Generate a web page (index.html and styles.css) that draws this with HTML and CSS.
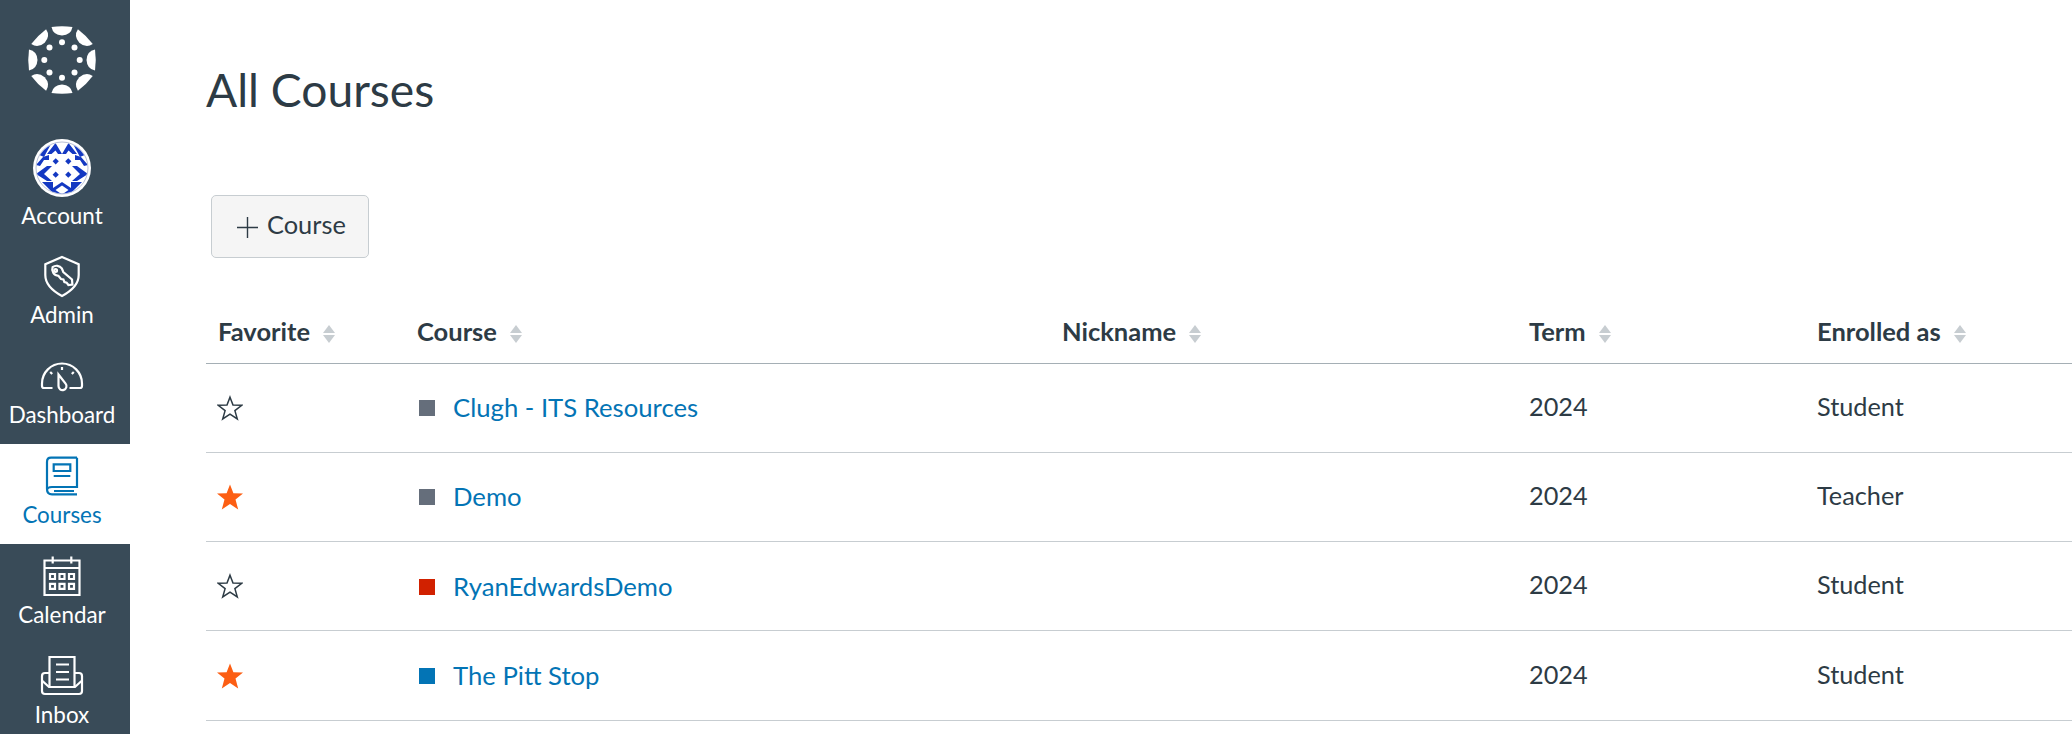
FILE: index.html
```html
<!DOCTYPE html>
<html lang="en">
<head>
<meta charset="utf-8">
<title>All Courses</title>
<link rel="stylesheet" href="styles.css">
</head>
<body>
<div class="app">
  <nav class="nav">
    <div class="nav-logo">
      <svg class="logo" viewBox="-35 -35 70 70" aria-hidden="true">
        <defs>
          <path id="petal" d="M-10.5 -33 Q0 -34.5 10.5 -33 Q9 -25 0 -24.5 Q-9 -25 -10.5 -33Z"/>
        </defs>
        <g fill="#fff">
          <use href="#petal"/><use href="#petal" transform="rotate(45)"/><use href="#petal" transform="rotate(90)"/><use href="#petal" transform="rotate(135)"/>
          <use href="#petal" transform="rotate(180)"/><use href="#petal" transform="rotate(225)"/><use href="#petal" transform="rotate(270)"/><use href="#petal" transform="rotate(315)"/>
          <circle cx="0" cy="-17.7" r="3"/><circle cx="12.5" cy="-12.5" r="3"/><circle cx="17.7" cy="0" r="3"/><circle cx="12.5" cy="12.5" r="3"/>
          <circle cx="0" cy="17.7" r="3"/><circle cx="-12.5" cy="12.5" r="3"/><circle cx="-17.7" cy="0" r="3"/><circle cx="-12.5" cy="-12.5" r="3"/>
        </g>
      </svg>
    </div>
    <a class="nav-item nav-account">
      <svg class="avatar" viewBox="0 0 58 58" aria-hidden="true">
        <defs><clipPath id="disc"><circle cx="29" cy="29" r="25.5"/></clipPath></defs>
        <circle cx="29" cy="29" r="29" fill="#fff"/>
        <circle cx="29" cy="29" r="26" fill="#fff" stroke="#b9c0d6" stroke-width="1"/>
        <g clip-path="url(#disc)" fill="#1338c2">
          <polygon points="14,15 22.5,4 29,15 25,15 22.5,11.5 18.5,15"/>
          <polygon points="29,15 35.5,4 44,15 39.5,15 35.5,11.5 33,15"/>
          <polygon points="40,5 56,14 47,18"/>
          <polygon points="18,5 2,14 11,18"/>
          <polygon points="3,26 10,18 16,16 16,21 11,21 7,27"/>
          <polygon points="55,26 48,18 42,16 42,21 47,21 51,27"/>
          <polygon points="3,35 14,27 19,27 11,35 19,42 14,42"/>
          <polygon points="55,35 44,27 39,27 47,35 39,42 44,42"/>
          <polygon points="9,43 20,43 20,54"/>
          <polygon points="49,43 38,43 38,54"/>
          <polygon points="29,43 41,51 29,59 17,51"/>
          <polygon points="22.7,19.2 25.8,22.3 22.7,25.4 19.6,22.3"/>
          <polygon points="35.3,19.2 38.4,22.3 35.3,25.4 32.2,22.3"/>
          <polygon points="22.7,32.6 25.8,35.7 22.7,38.8 19.6,35.7"/>
          <polygon points="35.3,32.6 38.4,35.7 35.3,38.8 32.2,35.7"/>
        </g>
        <polygon clip-path="url(#disc)" points="29,46.5 35.5,51 29,55.5 22.5,51" fill="#fff"/>
      </svg>
      <span>Account</span>
    </a>
    <a class="nav-item">
      <svg class="nav-icon" viewBox="0 0 44 44" aria-hidden="true">
        <path d="M22 3 L38.7 10.3 V21 Q38.7 33 22 42 Q5.3 33 5.3 21 V10.3 Z"/>
        <path d="M12.6 13.2 A6.4 6.4 0 0 1 21.8 14.4 L23.3 18 L32 25.5 L32.4 30.5 L28.4 31 L26.6 28.6 L24.4 28 L23.4 25.4 L21 25 L18.4 21.8 A6.4 6.4 0 0 1 12.6 13.2Z"/>
        <circle cx="15.6" cy="16.4" r="1.4"/>
      </svg>
      <span>Admin</span>
    </a>
    <a class="nav-item">
      <svg class="nav-icon" viewBox="0 0 44 44" aria-hidden="true">
        <path d="M12.5 34 H4 Q2 34 2 32 V29.5 A20 20 0 0 1 42 29.5 V32 Q42 34 40 34 H29.5"/>
        <path d="M18.5 20.5 L25.6 29.6 A4 4 0 1 1 18.5 32 Z"/>
        <path d="M22 13 V16 M10.2 18 L12.2 20 M33.8 18 L31.8 20"/>
      </svg>
      <span>Dashboard</span>
    </a>
    <a class="nav-item nav-item-active">
      <svg class="nav-icon" viewBox="0 0 44 44" aria-hidden="true">
        <path d="M37 3.7 H11 Q7 3.7 7 8 V35 Q7 40.3 12 40.3 H37 M37 3.7 V33 H12 Q7 33 7 36.5"/>
        <path d="M13.7 10.3 H30.3 V17 H13.7 Z M13.7 22 H30.3 M14 37 H34"/>
      </svg>
      <span>Courses</span>
    </a>
    <a class="nav-item">
      <svg class="nav-icon" viewBox="0 0 44 44" aria-hidden="true">
        <path d="M4.5 6.5 H39.5 V41 H4.5 Z M4.5 14 H39.5 M12.7 2.5 V9.5 M31.3 2.5 V9.5"/>
        <path d="M10 20 H15 V25 H10 Z M19.5 20 H24.5 V25 H19.5 Z M29 20 H34 V25 H29 Z M10 29.8 H15 V34.8 H10 Z M19.5 29.8 H24.5 V34.8 H19.5 Z M29 29.8 H34 V34.8 H29 Z"/>
      </svg>
      <span>Calendar</span>
    </a>
    <a class="nav-item">
      <svg class="nav-icon" viewBox="0 0 44 44" aria-hidden="true">
        <path d="M9.5 33 V3 H34.5 V33"/>
        <path d="M16 10.5 H29 M16 18 H29 M16 25.5 H29"/>
        <path d="M9.5 19 H5 Q2 19 2 22 V37 Q2 40 5 40 H39 Q42 40 42 37 V22 Q42 19 39 19 H34.5 M2.5 27 L9 33 H35 L41.5 27"/>
      </svg>
      <span>Inbox</span>
    </a>
  </nav>

  <main class="main">
    <h1 class="title">All Courses</h1>
    <button class="add-btn" type="button">
      <svg class="plus" viewBox="0 0 21 21" aria-hidden="true"><path d="M0 10.5 H21 M10.5 0 V21"/></svg>
      <span class="add-label">Course</span>
    </button>
    <table class="courses">
      <colgroup>
        <col class="col-fav"><col class="col-course"><col class="col-nick"><col class="col-term"><col class="col-role">
      </colgroup>
      <thead>
        <tr>
          <th>Favorite<i class="sort"></i></th>
          <th>Course<i class="sort"></i></th>
          <th>Nickname<i class="sort"></i></th>
          <th>Term<i class="sort"></i></th>
          <th>Enrolled as<i class="sort"></i></th>
        </tr>
      </thead>
      <tbody>
        <tr>
          <td><svg class="star star-off" viewBox="0 0 26 26" aria-hidden="true"><path d="M13 2.2 L16 10 L24.8 10.3 L17.9 15.6 L20.3 24 L13 19.2 L5.7 24 L8.1 15.6 L1.2 10.3 L10 10 Z"/></svg></td>
          <td><span class="course-name"><i class="swatch swatch-gray"></i><a class="course-link">Clugh - ITS Resources</a></span></td>
          <td></td><td>2024</td><td>Student</td>
        </tr>
        <tr>
          <td><svg class="star star-on" viewBox="0 0 26 26" aria-hidden="true"><path d="M13 0.5 L16.4 9.3 L26 9.6 L18.5 15.6 L21.2 25.5 L13 20 L4.8 25.5 L7.5 15.6 L0 9.6 L9.6 9.3 Z"/></svg></td>
          <td><span class="course-name"><i class="swatch swatch-gray"></i><a class="course-link">Demo</a></span></td>
          <td></td><td>2024</td><td>Teacher</td>
        </tr>
        <tr>
          <td><svg class="star star-off" viewBox="0 0 26 26" aria-hidden="true"><path d="M13 2.2 L16 10 L24.8 10.3 L17.9 15.6 L20.3 24 L13 19.2 L5.7 24 L8.1 15.6 L1.2 10.3 L10 10 Z"/></svg></td>
          <td><span class="course-name"><i class="swatch swatch-red"></i><a class="course-link">RyanEdwardsDemo</a></span></td>
          <td></td><td>2024</td><td>Student</td>
        </tr>
        <tr>
          <td><svg class="star star-on" viewBox="0 0 26 26" aria-hidden="true"><path d="M13 0.5 L16.4 9.3 L26 9.6 L18.5 15.6 L21.2 25.5 L13 20 L4.8 25.5 L7.5 15.6 L0 9.6 L9.6 9.3 Z"/></svg></td>
          <td><span class="course-name"><i class="swatch swatch-blue"></i><a class="course-link">The Pitt Stop</a></span></td>
          <td></td><td>2024</td><td>Student</td>
        </tr>
      </tbody>
    </table>
  </main>
</div>
</body>
</html>
```

FILE: styles.css
```css
* { box-sizing: border-box; }
html, body { margin: 0; height: 100%; overflow: hidden; }
body { font-family: Lato, "Open Sans", sans-serif; color: #2d3b45; background: #fff; }
.app { display: flex; height: 734px; overflow: hidden; }

.nav { flex: 0 0 130px; width: 130px; background: #394b58; color: #fff; display: flex; flex-direction: column; overflow: hidden; }
.nav-logo { flex: 0 0 134px; display: flex; justify-content: center; padding: 25px 6px 0 0; }
.logo { width: 70px; height: 70px; }
.nav-item { flex: 0 0 100px; display: flex; flex-direction: column; align-items: center; padding: 10px 6px 0 0; font-size: 22.4px; line-height: 26px; }
.nav-account { flex-basis: 110px; padding-top: 5px; }
.nav-item-active { background: #fff; color: #0374b5; }
.nav-icon { width: 44px; height: 44px; fill: none; stroke: currentColor; stroke-width: 2.2; margin-bottom: 4px; }
.avatar { width: 58px; height: 58px; margin-bottom: 6px; }

.main { flex: 1; min-width: 0; padding: 0 0 0 76px; }
.title { margin: 0; padding-top: 60px; font-size: 46.2px; line-height: 58px; font-weight: 400; }
.add-btn { display: flex; align-items: center; gap: 9px; margin: 77px 0 0 5px; width: 158px; height: 63px; padding: 0 0 0 25px; background: #f5f5f5; border: 1px solid #c7cdd1; border-radius: 5px; font: inherit; font-size: 25.4px; color: #2d3b45; }
.plus { width: 21px; height: 21px; fill: none; stroke: #2d3b45; stroke-width: 1.4; margin-top: 1px; }
.add-label { padding-bottom: 6px; }

.courses { width: 1866px; margin-top: 35px; border-collapse: collapse; table-layout: fixed; font-size: 25.3px; }
.col-fav { width: 199px; }
.col-course { width: 645px; }
.col-nick { width: 467px; }
.col-term { width: 288px; }
.courses th { height: 70px; padding: 7px 12px 0; text-align: left; font-size: 25.5px; font-weight: 700; border-bottom: 1px solid #a5afb5; }
.courses td { height: 89.3px; padding: 0 12px 4px; border-bottom: 1px solid #c7cdd1; vertical-align: middle; }
.sort { display: inline-block; position: relative; width: 12px; height: 18px; margin-left: 13px; vertical-align: -2px; }
.sort::before, .sort::after { content: ""; position: absolute; left: 0; border-left: 6px solid transparent; border-right: 6px solid transparent; }
.sort::before { top: 0; border-bottom: 8px solid #c7cdd1; }
.sort::after { bottom: 0; border-top: 8px solid #c7cdd1; }

.star { display: block; width: 26px; height: 26px; margin-top: 4px; margin-left: -1px; }
.star-off { fill: #fff; stroke: #2d3b45; stroke-width: 1.5; }
.star-on { fill: #fc5e13; }
.course-name { display: flex; align-items: center; gap: 18px; padding: 3px 0 0 2px; }
.swatch { flex: 0 0 16px; height: 16px; margin-top: 2px; }
.swatch-gray { background: #656e7b; }
.swatch-red { background: #d12100; }
.swatch-blue { background: #0374b5; }
.course-link { color: #0374b5; font-size: 25.7px; }
```
